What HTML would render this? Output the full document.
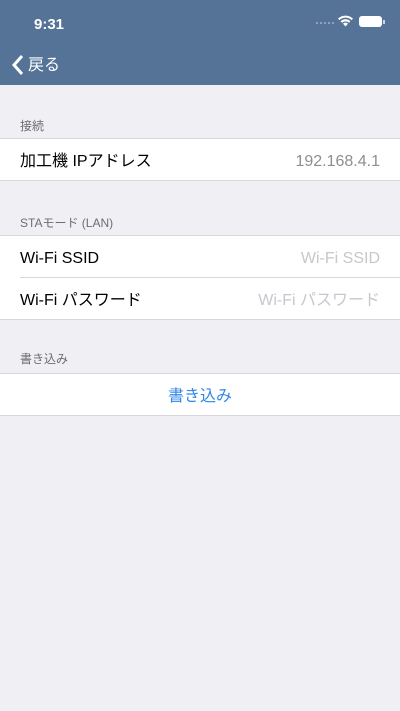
<!DOCTYPE html>
<html><head><meta charset="utf-8"><style>
*{margin:0;padding:0;box-sizing:border-box}
body{width:400px;height:711px;background:#efeff4;font-family:"Liberation Sans","Noto Sans CJK JP",sans-serif;position:relative;overflow:hidden}
.nav{position:absolute;left:0;top:0;width:400px;height:85px;background:#557397}
.time{position:absolute;left:34px;top:16px;color:#fff;font-size:15px;font-weight:bold;line-height:18px}
.back{position:absolute;left:28px;top:55px;color:#fff;font-size:16px;line-height:22px}
.lbl{position:absolute;left:20px;font-size:12px;color:#6d6d72}
.grp{position:absolute;left:0;width:400px;background:#fff;border-top:1px solid #d8d8dc;border-bottom:1px solid #d8d8dc}
.row{height:41px;position:relative;font-size:16px;color:#000;line-height:41px;padding-top:2px}
.row .l{position:absolute;left:20px;top:2px}
.row .r{position:absolute;right:20px;top:2px;color:#c7c7cd}
.sep{height:1px;background:#d8d8dc;margin-left:20px}
</style></head><body>
<div class="nav">
<div class="time">9:31</div>
<div style="position:absolute;left:316px;top:22px;width:18px;height:2px;border-top:2px dotted #8ea2bd"></div>
<svg style="position:absolute;left:337px;top:14px" width="17" height="13" viewBox="0 0 17 13"><path d="M8.5 12.5L6 9.6a3.6 3.6 0 0 1 5 0zM3.6 7.3a7 7 0 0 1 9.8 0l-1.4 1.5a5 5 0 0 0-7 0zM1 4.6a10.8 10.8 0 0 1 15 0l-1.4 1.5a8.8 8.8 0 0 0-12.2 0z" fill="#fff"/></svg>
<div style="position:absolute;left:359px;top:16px;width:23px;height:11px;border-radius:3px;background:#fff"></div>
<div style="position:absolute;left:383px;top:20px;width:1.5px;height:4px;background:#cdd5e0"></div>
<svg style="position:absolute;left:11px;top:54px" width="13" height="22" viewBox="0 0 13 22"><path d="M11 2L3 11l8 9" stroke="#fff" stroke-width="3" fill="none"/></svg>
<div class="back">戻る</div>
</div>
<div class="lbl" style="top:117px">接続</div>
<div class="grp" style="top:138px"><div class="row"><span class="l">加工機 IPアドレス</span><span class="r" style="color:#8e8e93">192.168.4.1</span></div></div>
<div class="lbl" style="top:214px">STAモード (LAN)</div>
<div class="grp" style="top:235px"><div class="row"><span class="l">Wi-Fi SSID</span><span class="r">Wi-Fi SSID</span></div><div class="sep"></div><div class="row"><span class="l">Wi-Fi パスワード</span><span class="r">Wi-Fi パスワード</span></div></div>
<div class="lbl" style="top:350px">書き込み</div>
<div class="grp" style="top:373px"><div class="row"><span class="l" style="left:0;width:400px;text-align:center;color:#2f86e8">書き込み</span></div></div>
</body></html>
